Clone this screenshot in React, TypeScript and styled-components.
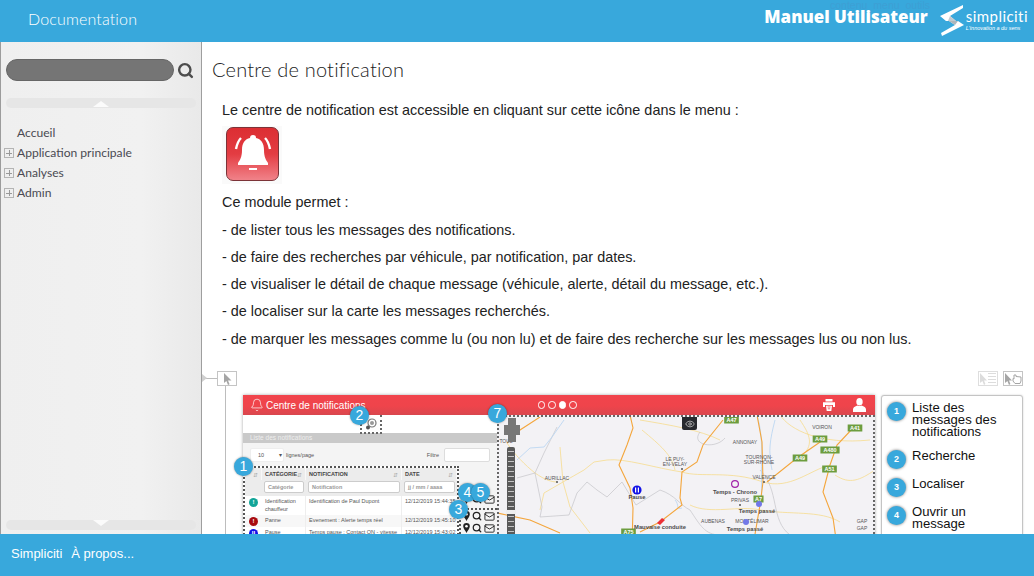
import React, { FC } from 'react';
import styled, { createGlobalStyle } from 'styled-components';
import { Bell, Eye, Mail, Search } from 'lucide-react';

const GlobalStyle = createGlobalStyle`
  html, body {
    margin: 0;
    height: 100%;
    overflow: hidden;
    background: #fff;
    font-family: 'Liberation Sans', Arial, sans-serif;
  }
  * { box-sizing: border-box; }
`;

const Page = styled.div`
  width: 1034px;
  height: 576px;
  display: flex;
  flex-direction: column;
  overflow: hidden;
`;

const Header = styled.header`
  height: 42px;
  flex: none;
  background: #38a8dc;
  display: flex;
  align-items: center;
  padding: 0 6px 6px 28px;
  position: relative;
`;

const HeaderTitle = styled.div`
  font-family: Lato, sans-serif;
  font-weight: 300;
  font-size: 16px;
  letter-spacing: 0.15px;
  color: #fff;
`;

const ManualTitle = styled.div`
  margin-left: auto;
  font-family: 'Open Sans', sans-serif;
  font-weight: 800;
  font-size: 16.9px;
  color: #fff;
  padding-bottom: 3px;
`;

const GhostLinks = styled.div`
  position: absolute;
  right: 104px;
  top: -1px;
  font-size: 10.5px;
  word-spacing: 3px;
  color: #3e9fd4;
`;

const Logo = styled.div`
  display: flex;
  align-items: center;
  gap: 2px;
  margin-left: 12px;
  padding-top: 5px;
`;

const LogoText = styled.div`
  display: flex;
  flex-direction: column;
  color: #fff;
`;

const LogoName = styled.span`
  font-family: Lato, sans-serif;
  font-size: 15px;
  letter-spacing: 0.45px;
  line-height: 15px;
`;

const LogoTagline = styled.span`
  font-size: 5.5px;
  font-style: italic;
  line-height: 8px;
  white-space: nowrap;
`;

const Main = styled.div`
  flex: 1;
  min-height: 0;
  display: flex;
  border-left: 1px solid #9c9c9c;
`;

const Sidebar = styled.aside`
  width: 201px;
  flex: none;
  background: linear-gradient(90deg, #efefef, #f1f1f1 70%, #e9e9e9);
  border-right: 1px solid #9e9e9e;
  display: flex;
  flex-direction: column;
  padding: 17px 5px 4px;
`;

const SearchRow = styled.div`
  display: flex;
  align-items: center;
  gap: 3px;
  color: #4d4d4d;
`;

const SearchInput = styled.div`
  width: 168px;
  height: 22px;
  border-radius: 11px;
  background: #757575;
  border: 1px solid #666;
`;

const ScrollBar = styled.div<{ $down?: boolean }>`
  width: 190px;
  height: 10px;
  flex: none;
  border-radius: 5px;
  background: #e6e6e6;
  display: flex;
  justify-content: center;
  margin-top: ${({ $down }) => ($down ? 'auto' : '17px')};

  &::after {
    content: '';
    width: 0;
    height: 0;
    border-left: 8px solid transparent;
    border-right: 8px solid transparent;
    ${({ $down }) =>
      $down
        ? 'border-top: 6px solid #fbfbfb;'
        : 'border-bottom: 6px solid #fbfbfb; margin-top: 3px;'}
  }
`;

const Tree = styled.ul`
  list-style: none;
  margin: 14px 0 0;
  padding: 0;
`;

const TreeItem = styled.li`
  height: 20px;
  display: flex;
  align-items: center;
  gap: 3px;
  margin-left: -2px;
  font-family: Lato, sans-serif;
  font-size: 12.1px;
  color: #4a4a52;
`;

const Expander = styled.span<{ $hidden?: boolean }>`
  width: 10px;
  height: 10px;
  flex: none;
  margin-top: 2px;
  border: 1px solid #b4b4b4;
  position: relative;
  visibility: ${({ $hidden }) => ($hidden ? 'hidden' : 'visible')};

  &::before,
  &::after {
    content: '';
    position: absolute;
    background: #999;
  }
  &::before { left: 1px; right: 1px; top: 3.5px; height: 1px; }
  &::after { top: 1px; bottom: 1px; left: 3.5px; width: 1px; }
`;

const Content = styled.main`
  flex: 1;
  min-width: 0;
  overflow: hidden;
  background: #fff;
`;

const PageTitle = styled.h1`
  margin: 0;
  height: 55px;
  padding: 15px 0 0 10px;
  font-family: Lato, sans-serif;
  font-weight: 300;
  font-size: 20px;
  letter-spacing: 0.2px;
  color: #222;
`;

const Body = styled.div`
  padding-left: 20px;
  font-size: 14.4px;
  color: #222;
`;

const Line = styled.p`
  margin: 0;
  line-height: 27.3px;
`;

const BellTile = styled.div`
  width: 60px;
  height: 58px;
  margin: 2px 0 5px 0;
  padding: 1px 4px;
  background: #fafafa;
`;

const BellBox = styled.div`
  width: 53px;
  height: 54px;
  border-radius: 7px;
  border: 1px solid #7c3338;
  background: linear-gradient(180deg, #dc2e33 0%, #e33c42 50%, #f08289 100%);
  display: flex;
  align-items: center;
  justify-content: center;
`;

const ToolRow = styled.div`
  height: 15px;
  margin-top: 18px;
  display: flex;
  align-items: center;
  padding-right: 11px;
  gap: 5px;
`;

const Connector = styled.div`
  width: 15px;
  height: 1px;
  background: #bdbdbd;
  margin-right: -5px;
  position: relative;

  &::before {
    content: '';
    position: absolute;
    left: 0;
    top: -4px;
    border-left: 5px solid #d0d0d0;
    border-top: 4px solid transparent;
    border-bottom: 4px solid transparent;
  }
`;

const ToolButton = styled.div<{ $faded?: boolean }>`
  width: 20px;
  height: 15px;
  border: 1px solid ${({ $faded }) => ($faded ? '#dedede' : '#c4c4c4')};
  display: flex;
  align-items: center;
  justify-content: center;
  color: ${({ $faded }) => ($faded ? '#dcdcdc' : '#a5a5a5')};
`;

const ToolSpacer = styled.div`
  flex: 1;
`;

const TreeBody = styled.div`
  margin-left: 23px;
  padding: 9px 11px 0 17px;
  border-left: 1px solid #bdbdbd;
  display: flex;
  gap: 6px;
  height: 160px;
`;

const Shot = styled.figure`
  margin: 0;
  width: 632px;
  height: 151px;
  flex: none;
  position: relative;
  background: #fff;
  box-shadow: 0 0 3px rgba(0, 0, 0, 0.35);
  font-size: 6px;
  color: #555;
`;

const ShotBar = styled.div`
  height: 20px;
  background: linear-gradient(180deg, #f1444c 0%, #ef444b 55%, #d9474e 100%);
  display: flex;
  align-items: center;
  padding: 0 9px 0 7px;
  color: #fff;
  font-size: 10px;
  gap: 2px;
`;

const Dots = styled.div`
  display: flex;
  gap: 3px;
  margin-left: 170px;
`;

const Dot = styled.span<{ $on?: boolean }>`
  width: 7.5px;
  height: 7.5px;
  border-radius: 50%;
  border: 1px solid #fff;
  background: ${({ $on }) => ($on ? '#fff' : 'transparent')};
`;

const BarIcons = styled.div`
  margin-left: auto;
  display: flex;
  align-items: center;
  gap: 18px;
`;

const ShotBody = styled.div`
  display: flex;
  height: 131px;
`;

const LeftPane = styled.div`
  width: 254px;
  flex: none;
  display: flex;
  flex-direction: column;
  background: #f4f4f4;
`;

const SearchStrip = styled.div`
  height: 18px;
  flex: none;
  background: #fff;
  display: flex;
  justify-content: center;
  padding-left: 1px;
`;

const SearchToggle = styled.div`
  width: 22px;
  height: 19px;
  border: 2px dotted #666;
  border-top: 0;
  display: flex;
  align-items: center;
  justify-content: center;
  z-index: 1;
`;

const ListTitle = styled.div`
  height: 10px;
  flex: none;
  background: #c9c9c9;
  color: #eee;
  font-size: 6.5px;
  line-height: 10px;
  padding-left: 7px;
`;

const Controls = styled.div`
  height: 23px;
  flex: none;
  display: flex;
  align-items: center;
  padding: 0 7px;
  font-size: 5.5px;
  gap: 2px;
`;

const PageSelect = styled.div`
  width: 34px;
  height: 14px;
  background: #fff;
  border-radius: 2px;
  border: 1px solid #eee;
  display: flex;
  align-items: center;
  justify-content: space-between;
  padding-left: 7px;
  padding-right: 1px;
`;

const FilterLabel = styled.span`
  margin-left: auto;
  margin-right: 3px;
`;

const FilterInput = styled.div`
  width: 46px;
  height: 14px;
  background: #fff;
  border: 1px solid #ddd;
  border-radius: 2px;
`;

const TableRow = styled.div`
  display: flex;
  flex: 1;
  min-height: 0;
`;

const Table = styled.div`
  width: 216px;
  flex: none;
  border: 1px dotted #555;
  border-width: 2px 2px 0 2px;
  display: grid;
  grid-template-columns: 17px 44px 96px 55px;
  grid-auto-rows: min-content;
  background: #fff;
`;

const HeadCell = styled.div`
  height: 12px;
  background: #ececec;
  border-right: 1px solid #f8f8f8;
  display: flex;
  align-items: center;
  justify-content: space-between;
  padding: 0 3px;
  font-weight: 700;
  font-size: 5.5px;
  color: #444;
`;

const SortMark = styled.span`
  color: #aaa;
  font-size: 6px;
  font-weight: 400;
`;

const FilterCell = styled.div`
  height: 16px;
  background: #ececec;
  padding: 1px 2px 2px;
`;

const FilterField = styled.div`
  height: 12px;
  background: #fff;
  border: 1px solid #ccc;
  border-radius: 2px;
  font-size: 5.5px;
  line-height: 10px;
  padding-left: 3px;
  color: #999;
  font-weight: 700;
  white-space: nowrap;
  overflow: hidden;
`;

const Cell = styled.div<{ $alt?: boolean }>`
  min-height: 12px;
  background: ${({ $alt }) => ($alt ? '#f7f7f7' : '#fff')};
  padding: 2px 3px;
  font-size: 5.5px;
  line-height: 7.5px;
  border-right: 1px solid #eee;
  color: #555;
`;

const DateCell = styled(Cell)`
  white-space: nowrap;
  border-right: 0;
`;

const StatusCell = styled(Cell)`
  padding: 2px 0 0 4px;
  border-right: 0;
`;

const Status = styled.span<{ $color: string }>`
  display: flex;
  align-items: center;
  justify-content: center;
  width: 9px;
  height: 9px;
  border-radius: 50%;
  background: ${({ $color }) => $color};
  color: #fff;
  font-size: 6px;
  font-weight: 700;
`;

const ActionsCol = styled.div`
  flex: 1;
  display: flex;
  flex-direction: column;
  padding-top: 27px;
`;

const ActionRow = styled.div`
  height: 12px;
  display: flex;
  align-items: center;
  justify-content: flex-end;
  gap: 2px;
  padding-right: 2px;
  color: #222;
`;

const ActionBox = styled.div`
  border: 1px dotted #555;
  border-width: 2px 0 0 2px;
  margin-top: 3px;
  flex: 1;
`;

const MapPane = styled.div`
  flex: 1;
  min-width: 0;
  position: relative;
  border: 1px dotted #666;
  border-width: 2px 2px 0 2px;
  background: #f3f2f5;
  overflow: hidden;
`;

const MapSvg = styled.svg`
  display: block;
  width: 378px;
  height: 131px;
`;

const EyeButton = styled.div`
  position: absolute;
  left: 183px;
  top: 0;
  width: 15px;
  height: 13px;
  border-radius: 0 0 2px 2px;
  background: #27292e;
  color: #bbb;
  display: flex;
  align-items: center;
  justify-content: center;
`;

const ZoomRail = styled.div`
  position: absolute;
  left: 8px;
  top: 30px;
  width: 8px;
  height: 100px;
  border-radius: 2px;
  background:
    repeating-linear-gradient(180deg, #5a5a5a 0 4px, #c4c4c4 4px 5px) center / 6px 100% no-repeat,
    #5a5a5a;

  &::after {
    content: '';
    position: absolute;
    left: -1px;
    right: -1px;
    top: 63px;
    height: 4px;
    background: #eee;
  }
`;

const ZoomPad = styled.div`
  position: absolute;
  left: 5px;
  top: 1px;
  width: 16px;
  height: 24px;
  background:
    linear-gradient(#777, #777) center / 8px 100% no-repeat,
    linear-gradient(#777, #777) center / 100% 10px no-repeat;
`;

const Badge = styled.div<{ $x: number; $y: number }>`
  position: absolute;
  left: ${({ $x }) => $x}px;
  top: ${({ $y }) => $y}px;
  width: 19px;
  height: 19px;
  border-radius: 50%;
  background: #38a8dc;
  color: #fff;
  font-size: 14px;
  line-height: 19px;
  text-align: center;
  box-shadow: 0 0 2px rgba(0, 0, 0, 0.45);
  z-index: 2;
`;

const Legend = styled.aside`
  width: 142px;
  height: 151px;
  flex: none;
  background: #fff;
  border: 1px solid #c4c4c4;
  border-radius: 3px;
  box-shadow: 0 0 2px rgba(0, 0, 0, 0.2);
  padding: 6px 0 0 5px;
`;

const LegendItem = styled.div<{ $gap: number }>`
  display: flex;
  gap: 6px;
  margin-bottom: ${({ $gap }) => $gap}px;
  font-size: 13.1px;
  line-height: 12px;
  color: #111;
`;

const LegendBadge = styled.span`
  width: 19px;
  height: 19px;
  flex: none;
  border-radius: 50%;
  background: #38a8dc;
  color: #fff;
  font-size: 9px;
  font-weight: 700;
  line-height: 19px;
  text-align: center;
  box-shadow: 0 0 3px rgba(0, 0, 0, 0.55);
`;

const Footer = styled.footer`
  height: 42px;
  flex: none;
  background: #38a8dc;
  color: #fff;
  font-size: 13px;
  display: flex;
  align-items: center;
  gap: 9px;
  padding: 0 0 4px 11px;
`;

const CursorIcon: FC = () => (
  <svg width="9" height="12" viewBox="0 0 9 12">
    <path d="M1 0 L1 10 L3.4 8 L5 12 L6.6 11.3 L5 7.5 L8.5 7.5 Z" fill="currentColor" />
  </svg>
);

const ListIcon: FC = () => (
  <svg width="18" height="13" viewBox="0 0 18 13">
    <path d="M1 1 L1 11 L3.4 9 L5 13 L6.4 12 L5 8.5 L8 8.5 Z" fill="currentColor" />
    <path d="M9 1.5H17M9 4.5H17M9 7.5H17M9 10.5H17" stroke="currentColor" strokeWidth="1.2" />
  </svg>
);

const HandIcon: FC = () => (
  <svg width="18" height="13" viewBox="0 0 18 13">
    <path d="M1 1 L1 11 L3.4 9 L5 13 L6.4 12 L5 8.5 L8 8.5 Z" fill="currentColor" />
    <path
      d="M10 3 L10 7 L9 6.5 L9 9 L11 11.5 L16 11.5 L17 9 L17 5 L12 4.5 L12 3 Z"
      fill="none"
      stroke="currentColor"
      strokeWidth="1"
    />
  </svg>
);

const LogoMark: FC = () => (
  <svg width="24" height="31" viewBox="0 0 24 31">
    <path d="M23 0 L23 3 L10 11 L16 16 L6 16 L0 11 Z" fill="#fff" />
    <path d="M10 11 L16 16 L8 16 Z" fill="#c3cacf" />
    <path d="M9 16 L18 16 L24 20 L2 31 L1 28 L15 20 Z" fill="#fff" />
    <path d="M9 16 L18 16 L15 20 Z" fill="#aeb6bb" />
  </svg>
);

const AlertBell: FC = () => (
  <svg width="44" height="44" viewBox="0 0 44 44">
    <path
      d="M22 3 C24 3 25 4 25 6 C30 7 33 11 33 18 C33 25 35 28 37 31 L37 33 L7 33 L7 31 C9 28 11 25 11 18 C11 11 14 7 19 6 C19 4 20 3 22 3 Z"
      fill="#fff"
    />
    <path d="M18 37 L26 37" stroke="#fff" strokeWidth="2" />
    <path d="M10 6 C7 9 6 12 5 17" stroke="#fff" strokeWidth="2.4" fill="none" />
    <path d="M34 6 C37 9 38 12 39 17" stroke="#fff" strokeWidth="2.4" fill="none" />
  </svg>
);

const PinIcon: FC = () => (
  <svg width="7" height="10" viewBox="0 0 7 10">
    <path d="M3.5 0 A3.3 3.3 0 0 1 6.8 3.3 C6.8 5.5 4.5 8 3.5 10 C2.5 8 0.2 5.5 0.2 3.3 A3.3 3.3 0 0 1 3.5 0 Z" fill="#222" />
    <circle cx="3.5" cy="3.3" r="1.3" fill="#fff" />
  </svg>
);

const PrintIcon: FC = () => (
  <svg width="12" height="12" viewBox="0 0 12 12">
    <path d="M2.5 0 H9.5 V2.5 H2.5 Z" fill="#fff" />
    <path d="M0 3.3 H12 V8 H10 V6 H2 V8 H0 Z" fill="#fff" />
    <path d="M3 6.8 H9 L8.3 12 H3.7 Z" fill="#fff" />
    <path d="M4.5 8 H7.5 M4.8 9.8 H7.2" stroke="#e8585e" strokeWidth="0.9" />
  </svg>
);

const UserIcon: FC = () => (
  <svg width="13" height="14" viewBox="0 0 13 14">
    <ellipse cx="6.5" cy="3.8" rx="3.2" ry="3.8" fill="#fff" />
    <path d="M0 14 L0 11.5 C0 9 2 8.6 4.4 7.4 C5.5 8.2 7.5 8.2 8.6 7.4 C11 8.6 13 9 13 11.5 L13 14 Z" fill="#fff" />
  </svg>
);

const shields = [
  { name: 'A47', x: 731.5, y: 420 },
  { name: 'A41', x: 855, y: 428 },
  { name: 'A49', x: 820, y: 439 },
  { name: 'A480', x: 830, y: 450 },
  { name: 'A49', x: 800, y: 458 },
  { name: 'A51', x: 829.5, y: 469 },
  { name: 'A7', x: 758.5, y: 499 },
  { name: 'A75', x: 628.5, y: 532 },
];

const cities = [
  { name: 'VOIRON', x: 822, y: 429 },
  { name: 'ANNONAY', x: 745, y: 444 },
  { name: 'TOURNON-', x: 759, y: 459 },
  { name: 'SUR-RHÔNE', x: 759, y: 464 },
  { name: 'LE PUY-', x: 675, y: 461 },
  { name: 'EN-VELAY', x: 675, y: 466 },
  { name: 'AURILLAC', x: 557, y: 480 },
  { name: 'VALENCE', x: 764, y: 479 },
  { name: 'PRIVAS', x: 740, y: 502 },
  { name: 'AUBENAS', x: 713, y: 523 },
  { name: 'MONTÉLIMAR', x: 752, y: 523 },
  { name: 'GAP', x: 862, y: 523 },
  { name: 'GAP', x: 862, y: 530 },
  { name: 'TOUL', x: 506, y: 443 },
];

const events = [
  { name: 'Temps - Chrono', x: 735, y: 494 },
  { name: 'Temps passé', x: 757, y: 513 },
  { name: 'Temps passé', x: 745, y: 531 },
  { name: 'Pause', x: 637, y: 499 },
  { name: 'Mauvaise conduite', x: 660, y: 529 },
];

const towns = [
  [557, 482],
  [682, 469],
  [764, 482],
  [740, 505],
];

const MapDrawing: FC = () => (
  <MapSvg viewBox="499 417 378 131">
    <g fill="none" stroke="#f6dc8e" strokeWidth="0.8">
      <path d="M507 443 C515 455 525 465 535 473 C545 480 552 482 557 482" />
      <path d="M560 447 L563 482 L544 493 L540 510" />
      <path d="M563 482 L584 470 L594 462 L607 460 C625 458 655 468 682 472" />
      <path d="M563 482 L570 507 L590 533" />
      <path d="M682 472 C700 478 730 470 763 482 C790 490 810 470 830 465" />
      <path d="M720 440 C700 430 670 425 640 420" />
      <path d="M780 415 C790 430 820 445 870 440" />
      <path d="M835 475 C850 485 860 480 875 470" />
      <path d="M690 505 C710 515 740 505 760 510 C790 515 820 510 840 522" />
      <path d="M642 430 C660 445 672 455 675 470" />
      <path d="M800 420 C810 435 815 445 800 458" />
    </g>
    <g fill="none" stroke="#c4c4c9" strokeWidth="0.7">
      <path d="M557 427 L544 453 L535 473 L517 478" />
      <path d="M535 473 L542 507 L540 517 L569 515 L577 493 L587 482 L597 490 L607 497 L622 482 L636 505 L660 490 C675 495 680 505 690 510 C700 525 705 535 720 535" />
      <path d="M700 432 C690 445 715 450 725 438" />
      <path d="M760 470 C780 490 770 520 790 535" />
    </g>
    <g fill="none" stroke="#bcd7f2" strokeWidth="0.9">
      <path d="M517 460 L530 448 L544 447 L552 437 L564 420" />
      <path d="M757 415 C765 440 760 470 762 500" />
      <path d="M675 500 C680 505 675 510 682 508" />
      <path d="M775 420 C770 440 768 450 772 470" />
    </g>
    <g fill="none" stroke="#f4a63c" strokeWidth="1.1">
      <path d="M630 415 L633 428 L627 445 L619 465 L630 488 L633 508 L632 546" />
      <path d="M723 420 L703 445 L697 462 L682 472 L680 498 L682 505 L660 522 L640 532" />
      <path d="M757 415 L762 442 L763 482 L760 505 L753 546" />
      <path d="M853 428 L837 445 L830 465 L823 492 L833 518 L837 546" />
      <path d="M507 443 L520 430 L540 417" />
      <path d="M823 440 L797 458 L767 482" />
      <path d="M497 513 L530 520 L560 533" />
    </g>
    {towns.map(([x, y]) => (
      <circle key={x} cx={x} cy={y} r="1" fill="#555" />
    ))}
    {cities.map((city, index) => (
      <text key={index} x={city.x} y={city.y} fontSize="5" fill="#555" textAnchor="middle">
        {city.name}
      </text>
    ))}
    {shields.map((shield, index) => (
      <g key={index}>
        <rect
          x={shield.x - (shield.name.length * 2.4 + 0.5) * 1.9 / 2}
          y={shield.y - 3.5}
          width={(shield.name.length * 2.4 + 0.5) * 1.9}
          height="7"
          fill="#6d9d3f"
        />
        <text x={shield.x} y={shield.y + 2} fontSize="5.5" fontWeight="700" fill="#fff" textAnchor="middle">
          {shield.name}
        </text>
      </g>
    ))}
    <circle cx="637" cy="490" r="4.6" fill="#1212e6" />
    <path d="M635.6 487.6V492.4M638.4 487.6V492.4" stroke="#fff" strokeWidth="1.2" />
    <circle cx="735" cy="484" r="3.4" fill="none" stroke="#a020a8" strokeWidth="1.2" />
    <circle cx="759" cy="504" r="3" fill="#7278e8" />
    <circle cx="746" cy="522" r="3" fill="#7278e8" />
    <path d="M657 523 L662 518 L665 520 L660 525 Z" fill="#ec2f35" />
    {events.map((event, index) => (
      <text key={index} x={event.x} y={event.y} fontSize="5.8" fontWeight="700" fill="#4b4b4b" textAnchor="middle">
        {event.name}
      </text>
    ))}
  </MapSvg>
);

const rows = [
  { color: '#12a598', mark: '!', cat: 'Identification chauffeur', text: 'Identification de Paul Dupont', date: '12/12/2019 15:44:35' },
  { color: '#a80b10', mark: '!', cat: 'Panne', text: 'Evenement : Alerte temps réel', date: '12/12/2019 15:45:10', alt: true },
  { color: '#1212e6', mark: 'II', cat: 'Pause', text: 'Temps pause : Contact ON - vitesse nulle', date: '12/12/2019 15:43:02' },
];

const legend = [
  { label: 'Liste des messages des notifications', gap: 12 },
  { label: 'Recherche', gap: 9 },
  { label: 'Localiser', gap: 9 },
  { label: 'Ouvrir un message', gap: 12 },
];

const summary = [
  '- de lister tous les messages des notifications.',
  '- de faire des recherches par véhicule, par notification, par dates.',
  '- de visualiser le détail de chaque message (véhicule, alerte, détail du message, etc.).',
  '- de localiser sur la carte les messages recherchés.',
  '- de marquer les messages comme lu (ou non lu) et de faire des recherche sur les messages lus ou non lus.',
];

const ActionIcons: FC = () => (
  <>
    <PinIcon />
    <Search size={10} strokeWidth={3} />
    <Mail size={11} />
  </>
);

const App: FC = () => (
  <Page>
    <GlobalStyle />
    <Header>
      <HeaderTitle>Documentation</HeaderTitle>
      <GhostLinks>contenu menu outils</GhostLinks>
      <ManualTitle>Manuel Utilisateur</ManualTitle>
      <Logo>
        <LogoMark />
        <LogoText>
          <LogoName>simpliciti</LogoName>
          <LogoTagline>L'innovation a du sens</LogoTagline>
        </LogoText>
      </Logo>
    </Header>
    <Main>
      <Sidebar>
        <SearchRow>
          <SearchInput />
          <Search size={17} strokeWidth={3.4} />
        </SearchRow>
        <ScrollBar />
        <Tree>
          <TreeItem>
            <Expander $hidden />
            Accueil
          </TreeItem>
          <TreeItem>
            <Expander />
            Application principale
          </TreeItem>
          <TreeItem>
            <Expander />
            Analyses
          </TreeItem>
          <TreeItem>
            <Expander />
            Admin
          </TreeItem>
        </Tree>
        <ScrollBar $down />
      </Sidebar>
      <Content>
        <PageTitle>Centre de notification</PageTitle>
        <Body>
          <Line>Le centre de notification est accessible en cliquant sur cette icône dans le menu :</Line>
          <BellTile>
            <BellBox>
              <AlertBell />
            </BellBox>
          </BellTile>
          <Line>Ce module permet :</Line>
          {summary.map((line) => (
            <Line key={line}>{line}</Line>
          ))}
        </Body>
        <ToolRow>
          <Connector />
          <ToolButton>
            <CursorIcon />
          </ToolButton>
          <ToolSpacer />
          <ToolButton $faded>
            <ListIcon />
          </ToolButton>
          <ToolButton>
            <HandIcon />
          </ToolButton>
        </ToolRow>
        <TreeBody>
          <Shot>
            <ShotBar>
              <Bell size={14} strokeWidth={1.2} />
              Centre de notifications
              <Dots>
                <Dot />
                <Dot />
                <Dot $on />
                <Dot />
              </Dots>
              <BarIcons>
                <PrintIcon />
                <UserIcon />
              </BarIcons>
            </ShotBar>
            <ShotBody>
              <LeftPane>
                <SearchStrip>
                  <SearchToggle>
                    <svg width="12" height="12" viewBox="0 0 12 12">
                      <circle cx="7" cy="5" r="4" fill="none" stroke="#777" strokeWidth="1.2" />
                      <circle cx="7" cy="5" r="2" fill="#999" />
                      <circle cx="3" cy="9.5" r="2" fill="#555" />
                    </svg>
                  </SearchToggle>
                </SearchStrip>
                <ListTitle>Liste des notifications</ListTitle>
                <Controls>
                  <PageSelect>
                    10
                    <span>▾</span>
                  </PageSelect>
                  lignes/page
                  <FilterLabel>Filtre</FilterLabel>
                  <FilterInput />
                </Controls>
                <TableRow>
                  <Table>
                    <HeadCell>
                      <span />
                      <SortMark>⇵</SortMark>
                    </HeadCell>
                    <HeadCell>
                      CATÉGORIE
                      <SortMark>⇵</SortMark>
                    </HeadCell>
                    <HeadCell>
                      NOTIFICATION
                      <SortMark>⇵</SortMark>
                    </HeadCell>
                    <HeadCell>
                      DATE
                      <SortMark>⇵</SortMark>
                    </HeadCell>
                    <FilterCell />
                    <FilterCell>
                      <FilterField>Catégorie</FilterField>
                    </FilterCell>
                    <FilterCell>
                      <FilterField>Notification</FilterField>
                    </FilterCell>
                    <FilterCell>
                      <FilterField>jj / mm / aaaa</FilterField>
                    </FilterCell>
                    {rows.map((row) => (
                      <React.Fragment key={row.cat}>
                        <StatusCell $alt={row.alt}>
                          <Status $color={row.color}>{row.mark}</Status>
                        </StatusCell>
                        <Cell $alt={row.alt}>{row.cat}</Cell>
                        <Cell $alt={row.alt}>{row.text}</Cell>
                        <DateCell $alt={row.alt}>{row.date}</DateCell>
                      </React.Fragment>
                    ))}
                  </Table>
                  <ActionsCol>
                    <ActionRow>
                      <ActionIcons />
                    </ActionRow>
                    <ActionBox>
                      <ActionRow>
                        <ActionIcons />
                      </ActionRow>
                      <ActionRow>
                        <ActionIcons />
                      </ActionRow>
                    </ActionBox>
                  </ActionsCol>
                </TableRow>
              </LeftPane>
              <MapPane>
                <MapDrawing />
                <EyeButton>
                  <Eye size={10} />
                </EyeButton>
                <ZoomPad />
                <ZoomRail />
              </MapPane>
            </ShotBody>
            <Badge $x={-9} $y={62}>1</Badge>
            <Badge $x={107} $y={11}>2</Badge>
            <Badge $x={206} $y={105}>3</Badge>
            <Badge $x={215} $y={88}>4</Badge>
            <Badge $x={228} $y={88}>5</Badge>
            <Badge $x={245} $y={9}>7</Badge>
          </Shot>
          <Legend>
            {legend.map((item, index) => (
              <LegendItem key={item.label} $gap={item.gap}>
                <LegendBadge>{index + 1}</LegendBadge>
                <span>{item.label}</span>
              </LegendItem>
            ))}
          </Legend>
        </TreeBody>
      </Content>
    </Main>
    <Footer>
      <span>Simpliciti</span>
      <span>À propos...</span>
    </Footer>
  </Page>
);

export default App;
